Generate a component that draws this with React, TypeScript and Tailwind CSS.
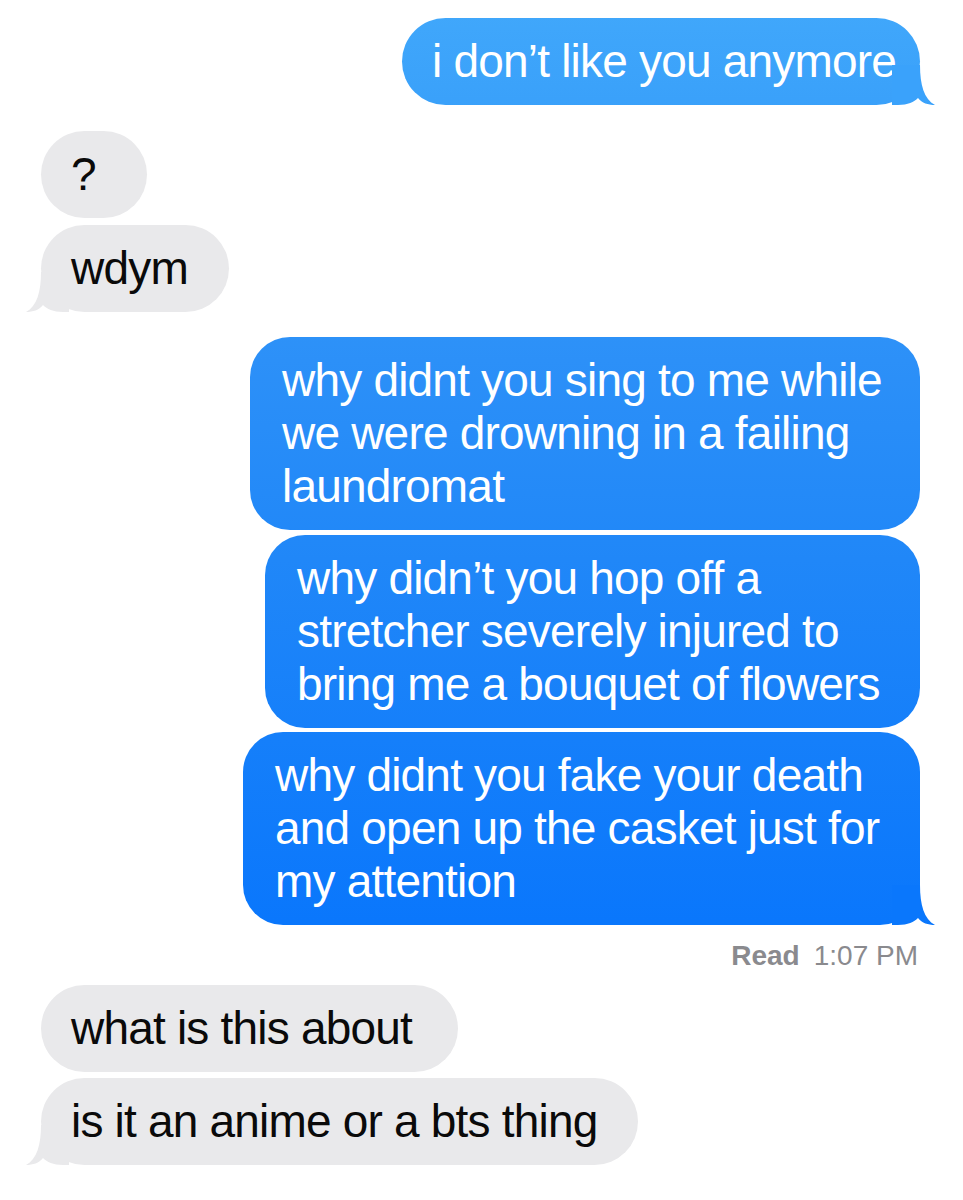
const font = { fontFamily: '"Liberation Sans", Arial, sans-serif' };

type Msg = {
  from: 'me' | 'them';
  lines: string[];
  width: string;
  gap: string;
  tail?: boolean;
  tailColor?: string;
};

const messages: Msg[] = [
  { from: 'me', lines: ['i don’t like you anymore'], width: 'w-[518px]', gap: 'mt-[18px]', tail: true, tailColor: '#3aa2fb' },
  { from: 'them', lines: ['?'], width: 'w-[106px]', gap: 'mt-[26px]' },
  { from: 'them', lines: ['wdym'], width: 'w-[188px]', gap: 'mt-[7px]', tail: true },
  {
    from: 'me',
    lines: ['why didnt you sing to me while', 'we were drowning in a failing', 'laundromat'],
    width: 'w-[670px]',
    gap: 'mt-[25px]',
  },
  {
    from: 'me',
    lines: ['why didn’t you hop off a', 'stretcher severely injured to', 'bring me a bouquet of flowers'],
    width: 'w-[655px]',
    gap: 'mt-[5px]',
  },
  {
    from: 'me',
    lines: ['why didnt you fake your death', 'and open up the casket just for', 'my attention'],
    width: 'w-[677px]',
    gap: 'mt-[4px]',
    tail: true,
    tailColor: '#0a77fc',
  },
];

const later: Msg[] = [
  { from: 'them', lines: ['what is this about'], width: 'w-[417px]', gap: 'mt-[9px]' },
  { from: 'them', lines: ['is it an anime or a bts thing'], width: 'w-[597px]', gap: 'mt-[6px]', tail: true },
];

function Tail({ side, color }: { side: 'left' | 'right'; color: string }) {
  return (
    <svg
      width="44"
      height="40"
      viewBox="0 0 44 40"
      className={
        side === 'right'
          ? 'absolute bottom-0 right-[-16px]'
          : 'absolute bottom-0 left-[-16px] -scale-x-100'
      }
    >
      <path
        d="M28 0 C28 20 32 34 43 40 C36 40 30 38 26 33 C22 37 16 40 6 40 L0 40 L0 0 Z"
        fill={color}
      />
    </svg>
  );
}

function Bubble({ m }: { m: Msg }) {
  const mine = m.from === 'me';
  const multi = m.lines.length > 1;
  return (
    <div className={`flex ${mine ? 'justify-end' : 'justify-start'} ${m.gap}`}>
      <div
        className={`relative ${m.width} ${multi ? 'rounded-[40px]' : 'rounded-[44px]'} pl-[30px] pr-[28px] py-[17px] text-[46px] leading-[53px] tracking-[-0.8px] whitespace-nowrap ${
          mine
            ? 'text-white bg-[linear-gradient(to_bottom,#41a8fb_0px,#3aa1fa_100px,#2c90f8_360px,#2087f8_560px,#0a77fc_920px,#0570ff_1200px)] bg-fixed'
            : 'text-[#0a0a0a] bg-[#e9e9eb]'
        }`}
      >
        {m.lines.map((l, i) => (
          <div key={i} className={mine && multi ? 'pl-[2px]' : ''}>
            {l}
          </div>
        ))}
        {m.tail && <Tail side={mine ? 'right' : 'left'} color={mine ? m.tailColor! : '#e9e9eb'} />}
      </div>
    </div>
  );
}

export default function App() {
  return (
    <div className="min-h-[1200px] bg-white pl-[41px] pr-[43px]" style={font}>
      <div className="flex flex-col">
        {messages.map((m, i) => (
          <Bubble key={i} m={m} />
        ))}
        <div className="mt-[11px] flex justify-end pr-[2px] text-[28px] leading-[40px] text-[#8a8a8e]">
          <span className="font-bold">Read</span>
          <span className="ml-[14px]">1:07 PM</span>
        </div>
        {later.map((m, i) => (
          <Bubble key={i} m={m} />
        ))}
      </div>
    </div>
  );
}
